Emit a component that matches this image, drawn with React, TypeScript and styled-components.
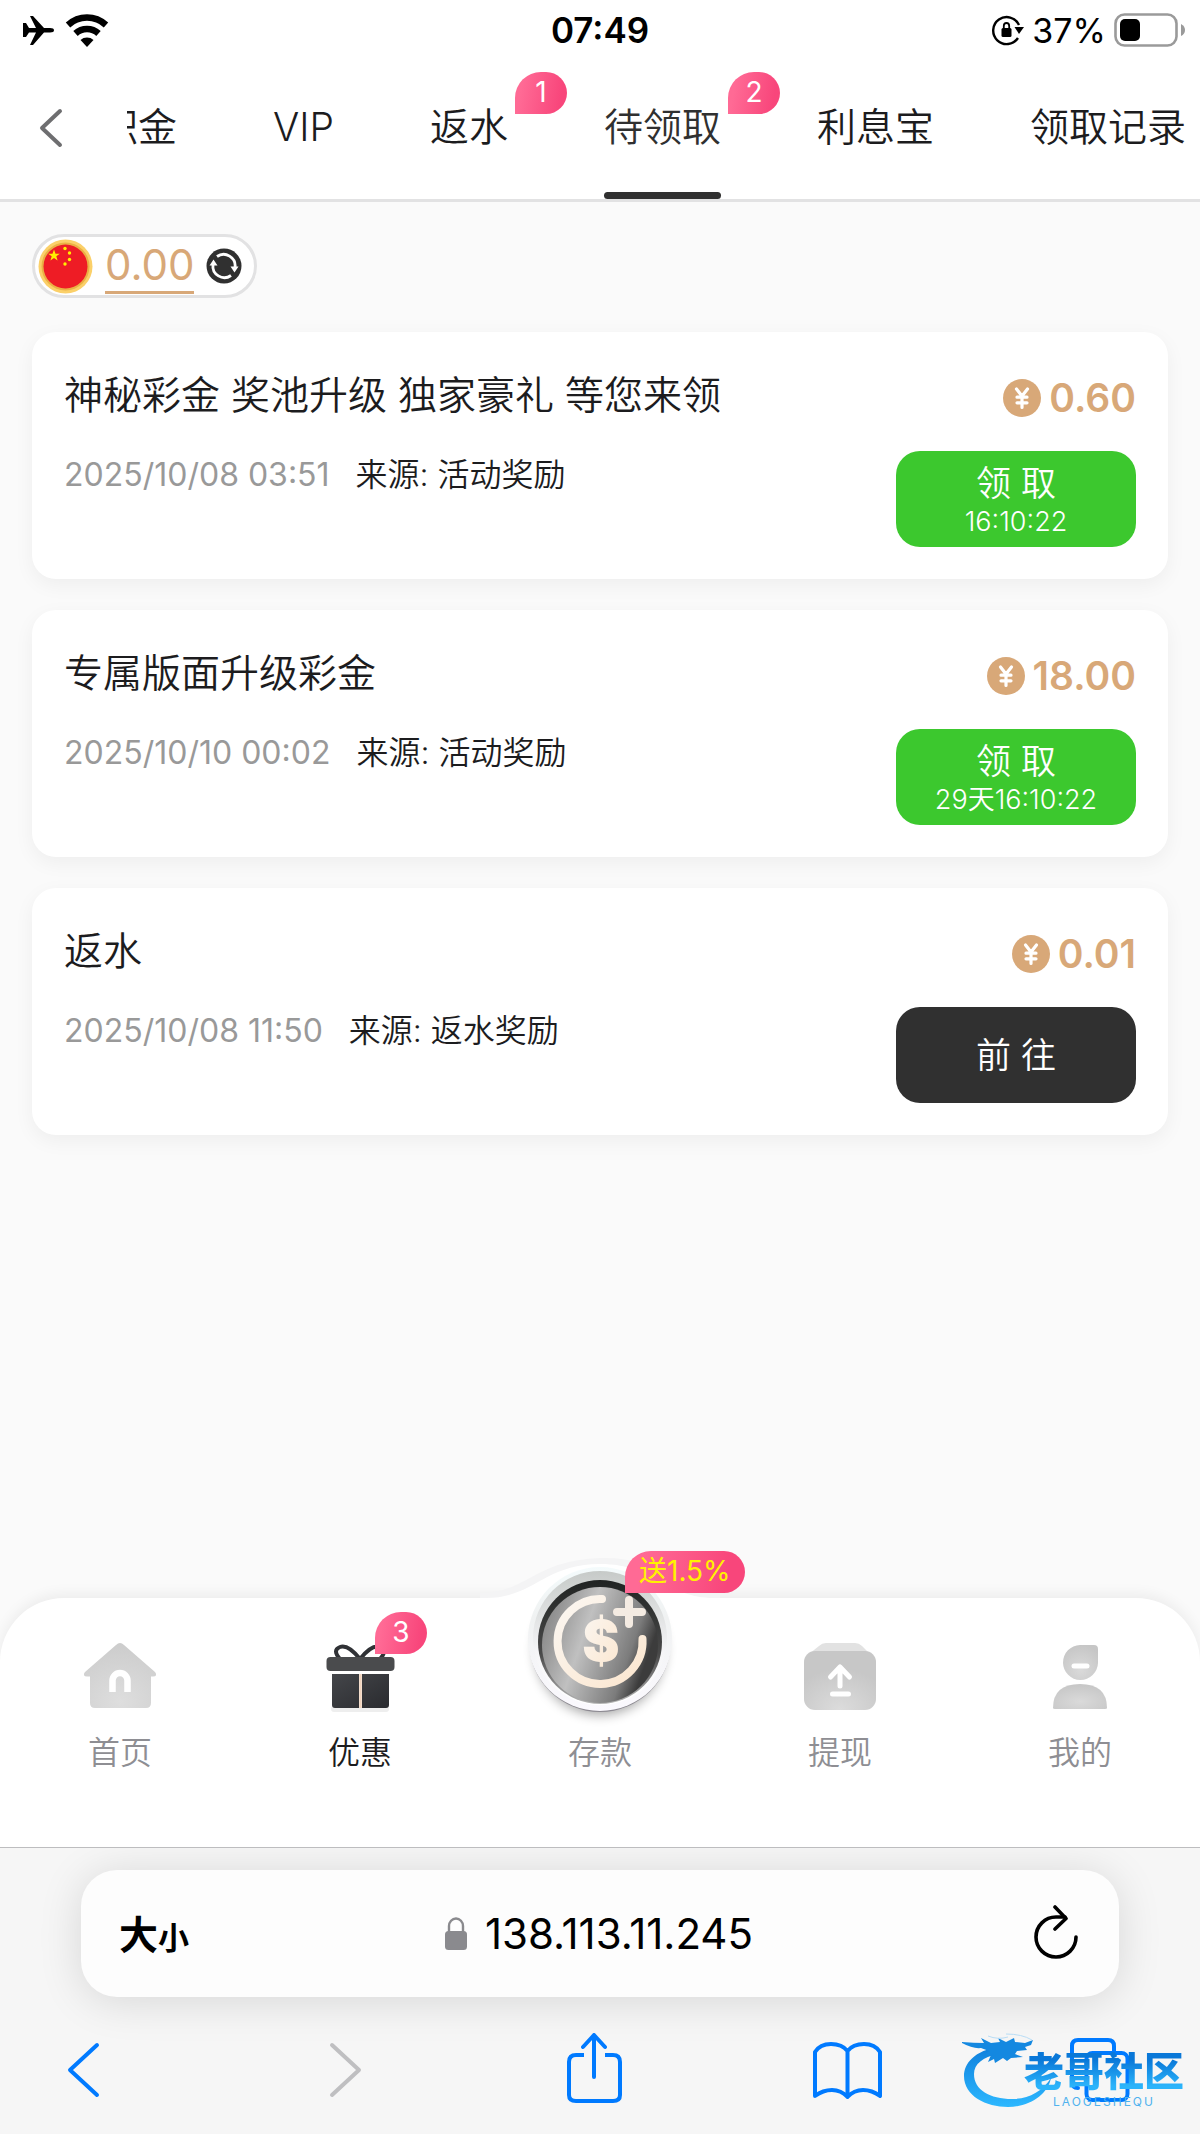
import React from "react";
import styled, { createGlobalStyle, css } from "styled-components";

const colors = {
  ink: "#1c1c1e",
  dark: "#303030",
  muted: "#8e8e93",
  date: "#999999",
  gold: "#d8a878",
  green: "#3cc82e",
  line: "#e2e2e3",
  blue: "#007aff",
};

const GlobalStyle = createGlobalStyle`
  *, *::before, *::after { box-sizing: border-box; }
  body {
    margin: 0;
    background: #fafafa;
    color: ${colors.ink};
    font-family: Inter, "Noto Sans CJK SC", sans-serif;
    font-weight: 350;
  }
  button {
    border: 0;
    padding: 0;
    background: none;
    color: inherit;
    font: inherit;
    cursor: pointer;
  }
  a { color: inherit; text-decoration: none; }
  h2, p { margin: 0; font-weight: inherit; }
  svg { display: block; flex: none; }
`;

const Page = styled.div`
  min-height: 100vh;
  display: flex;
  flex-direction: column;
`;

/* ---------- status bar ---------- */

const StatusBar = styled.div`
  display: grid;
  grid-template-columns: 1fr auto 1fr;
  align-items: center;
  height: 60px;
  padding: 0 14px;
  background: #fff;
  color: #000;
`;

const StatusGroup = styled.div<{ $end?: boolean }>`
  display: flex;
  align-items: center;
  gap: ${(p) => (p.$end ? 8 : 10)}px;
  justify-content: ${(p) => (p.$end ? "flex-end" : "flex-start")};
  padding-left: 8px;
  font-size: 34px;
  font-weight: 400;
`;

const Clock = styled.time`
  font-size: 35px;
  font-weight: 600;
`;

/* ---------- header with tabs ---------- */

const Header = styled.header`
  display: flex;
  background: #fff;
  border-bottom: 3px solid ${colors.line};
`;

const BackButton = styled.button`
  flex: none;
  width: 127px;
  padding: 0 0 4px 38px;
`;

const Tabs = styled.nav`
  flex: 1;
  min-width: 0;
  display: flex;
  justify-content: flex-end;
  gap: 96px;
  padding-right: 14px;
  overflow: hidden;
`;

const Tab = styled.a<{ $active?: boolean }>`
  position: relative;
  flex: none;
  height: 139px;
  padding-top: 39px;
  font-size: 39px;
  line-height: 56px;
  color: ${(p) => (p.$active ? colors.dark : colors.ink)};
  ${(p) =>
    p.$active &&
    css`
      &::after {
        content: "";
        position: absolute;
        left: 0;
        right: 0;
        bottom: 0;
        height: 7px;
        border-radius: 4px;
        background: ${colors.dark};
      }
    `}
`;

const Badge = styled.span`
  position: absolute;
  min-width: 52px;
  height: 42px;
  padding: 0 14px;
  border-radius: 26px 21px 21px 0;
  background: linear-gradient(100deg, #ff6a95 15%, #f8467b 85%);
  color: #fff;
  font-size: 28px;
  font-weight: 400;
  line-height: 41px;
  text-align: center;
  white-space: nowrap;
`;

const TabBadge = styled(Badge)`
  left: calc(100% + 7px);
  top: 12px;
`;

/* ---------- rewards ---------- */

const Main = styled.main`
  flex: 1;
  display: flex;
  flex-direction: column;
  align-items: flex-start;
  gap: 34px;
  padding: 32px;
`;

const Balance = styled.div`
  display: flex;
  align-items: center;
  gap: 12px;
  height: 64px;
  padding: 0 12px 0 3px;
  border: 3px solid ${colors.line};
  border-radius: 32px;
  background: #fff;
`;

const BalanceValue = styled.a`
  height: 55px;
  border-bottom: 3px solid ${colors.gold};
  color: ${colors.gold};
  font-size: 42px;
  font-weight: 400;
  line-height: 52px;
`;

const RewardList = styled.ul`
  align-self: stretch;
  display: flex;
  flex-direction: column;
  gap: 31px;
  margin: 0;
  padding: 0;
  list-style: none;
`;

const Card = styled.li`
  display: flex;
  justify-content: space-between;
  padding: 32px;
  border-radius: 24px;
  background: #fff;
  box-shadow: 0 6px 20px rgba(0, 0, 0, 0.05);
`;

const Info = styled.div`
  display: flex;
  flex-direction: column;
  gap: 28px;
`;

const Title = styled.h2`
  font-size: 39px;
  line-height: 61px;
`;

const Meta = styled.p`
  display: flex;
  gap: 26px;
  font-size: 32px;
  line-height: 44px;
`;

const DateText = styled.time`
  color: ${colors.date};
  font-weight: 400;
`;

const Claim = styled.div`
  display: flex;
  flex-direction: column;
  align-items: flex-end;
  gap: 20px;
`;

const Amount = styled.div`
  display: flex;
  align-items: center;
  gap: 8px;
  height: 67px;
  color: ${colors.gold};
  font-size: 39px;
  font-weight: 600;
`;

const ClaimButton = styled.button<{ $dark?: boolean }>`
  display: flex;
  flex-direction: column;
  align-items: center;
  justify-content: center;
  width: 240px;
  height: 96px;
  padding-top: ${(p) => (p.$dark ? 0 : 4)}px;
  border-radius: 24px;
  background: ${(p) => (p.$dark ? colors.dark : colors.green)};
  color: #fff;
`;

const ClaimLabel = styled.span`
  font-size: 35px;
  line-height: 42px;
`;

const Countdown = styled.span`
  font-size: 27px;
  line-height: 36px;
`;

/* ---------- app navigation ---------- */

const BottomNav = styled.nav`
  position: relative;
  display: grid;
  grid-template-columns: repeat(5, 1fr);
  height: 249px;
  padding-top: 44px;
  border-radius: 64px 64px 0 0;
  background: #fff;
  box-shadow: 0 -4px 14px rgba(0, 0, 0, 0.06);
`;

const Hump = styled.svg`
  position: absolute;
  left: 50%;
  top: -46px;
  margin-left: -120px;
`;

const NavItem = styled.a<{ $active?: boolean }>`
  display: flex;
  flex-direction: column;
  align-items: center;
  gap: 23px;
  color: ${(p) => (p.$active ? colors.ink : colors.muted)};
  font-size: 32px;
  line-height: 40px;
`;

const NavIcon = styled.span`
  position: relative;
  width: 72px;
  height: 68px;
`;

const CoinArt = styled.svg`
  position: absolute;
  left: -44px;
  top: -87px;
`;

const GiftBadge = styled(Badge)`
  left: 51px;
  top: -30px;
`;

const PromoBadge = styled(Badge)`
  left: 61px;
  top: -91px;
  color: #fff200;
`;

/* ---------- browser chrome ---------- */

const Browser = styled.footer`
  position: relative;
  padding-top: 22px;
  border-top: 1px solid #bdbdbf;
  background: #f6f6f6;
  color: #000;
  font-weight: 400;
  overflow: hidden;
`;

const AddressBar = styled.div`
  display: grid;
  grid-template-columns: 1fr auto 1fr;
  align-items: center;
  height: 127px;
  margin: 0 81px;
  padding: 0 40px 0 38px;
  border-radius: 36px;
  background: #fdfdfd;
  box-shadow: 0 4px 44px rgba(0, 0, 0, 0.13);
`;

const TextSize = styled.button`
  justify-self: start;
  padding-top: 6px;
  font-size: 39px;
  font-weight: 700;
  line-height: 50px;
  small { font-size: 31px; }
`;

const Address = styled.button`
  display: flex;
  align-items: center;
  gap: 18px;
  font-size: 42px;
`;

const ReloadButton = styled.button`
  justify-self: end;
  padding-bottom: 4px;
`;

const Toolbar = styled.div`
  display: flex;
  align-items: center;
  justify-content: space-between;
  height: 137px;
  padding: 6px 63px 0 47px;
`;

const ToolButton = styled.button`
  width: 72px;
  height: 72px;
`;

const Watermark = styled.div`
  position: absolute;
  right: 16px;
  bottom: 26px;
  display: flex;
  flex-direction: column;
  align-items: center;
  gap: 4px;
  pointer-events: none;
`;

const Dragon = styled.svg`
  position: absolute;
  right: 130px;
  bottom: 0;
`;

const WatermarkName = styled.span`
  position: relative;
  background: linear-gradient(#0a78d8 20%, #2bb4fb 85%);
  background-clip: text;
  color: transparent;
  font-size: 40px;
  font-weight: 900;
  line-height: 40px;
`;

const WatermarkSub = styled.span`
  position: relative;
  color: #4fb2ee;
  font-size: 12px;
  line-height: 12px;
  letter-spacing: 2px;
`;

/* ---------- drawings ---------- */

const Airplane = () => (
  <svg width="33" height="32" viewBox="0 0 33 32">
    <path d="M1 9h3l3 5h7L8 2h3l11 12h6q4 0 4 2.200t-4 2.200h-6L11 31H8l6-12.600H7L4 23H1z" />
  </svg>
);

const Wifi = () => (
  <svg width="44" height="33" viewBox="0 0 44 33">
    <path d="M22 33l-6.500-7a10 10 0 0 1 13 0z" />
    <path d="M10.500 19.500a17 17 0 0 1 23 0M3 11a28 28 0 0 1 38 0" fill="none" stroke="#000" strokeWidth="6.500" />
  </svg>
);

const RotationLock = () => (
  <svg width="32" height="32" viewBox="0 0 32 32">
    <path d="M26 24a13.500 13.500 0 1 1 1-13" fill="none" stroke="#000" strokeWidth="2.400" />
    <path d="M22.500 13H32l-5 7z" />
    <rect x="9.500" y="14" width="10" height="9" rx="1.500" />
    <path d="M11.800 15v-3a2.700 3 0 0 1 5.400 0v3" fill="none" stroke="#000" strokeWidth="1.800" />
  </svg>
);

const Battery = () => (
  <svg width="72" height="34" viewBox="0 0 72 34">
    <rect x="1.500" y="1.500" width="61" height="31" rx="9" fill="none" stroke="#9a9a9a" strokeWidth="2.600" />
    <rect x="6" y="6" width="20" height="22" rx="5" />
    <path d="M67 11q4 2 4 6t-4 6z" fill="#9a9a9a" />
  </svg>
);

const BackIcon = () => (
  <svg width="26" height="42" viewBox="0 0 26 42">
    <path d="M22 4L4 21l18 17" fill="none" stroke="#6e6e70" strokeWidth="4" strokeLinecap="round" strokeLinejoin="round" />
  </svg>
);

const starPath = "M0-6l1.500 4.200h4.300l-3.500 2.600 1.300 4.200L0 2.500l-3.600 2.500 1.300-4.200-3.500-2.600h4.300z";

const Flag = () => (
  <svg width="55" height="55" viewBox="0 0 55 55">
    <circle cx="27.500" cy="27.500" r="27" fill="#fbd069" />
    <circle cx="27.500" cy="27.500" r="24" fill="#eab044" />
    <circle cx="27.500" cy="27.500" r="22" fill="#ee1c25" />
    <g fill="#ffef00">
      <path d={starPath} transform="translate(16 16.500)" />
      <circle cx="27" cy="9.500" r="1.700" />
      <circle cx="31.500" cy="14" r="1.700" />
      <circle cx="31.500" cy="20.500" r="1.700" />
      <circle cx="27" cy="25" r="1.700" />
    </g>
  </svg>
);

const Refresh = () => (
  <svg width="36" height="36" viewBox="0 0 36 36">
    <circle cx="18" cy="18" r="17.500" fill={colors.dark} />
    <g fill="none" stroke="#fff" strokeWidth="2.800">
      <path d="M11 8.500a11.500 11.500 0 0 1 18 11" />
      <path d="M25 27.500a11.500 11.500 0 0 1-18-11" />
    </g>
    <path d="M24.500 18.500h8l-4 6zM3.500 17.500h8l-4-6z" fill="#fff" />
  </svg>
);

const Yuan = () => (
  <svg width="38" height="38" viewBox="0 0 38 38">
    <circle cx="19" cy="19" r="19" fill={colors.gold} />
    <path d="M13.500 10l5.500 7 5.500-7M19 17v11.500M14 18.200h10M14 23.800h10" fill="none" stroke="#fff" strokeWidth="3.200" strokeLinecap="round" strokeLinejoin="round" />
  </svg>
);

const HomeIcon = () => (
  <svg width="72" height="68" viewBox="0 0 72 68">
    <defs>
      <radialGradient id="homeFill" cx=".5" cy=".9" r=".9">
        <stop offset="0" stopColor="#dedede" />
        <stop offset="1" stopColor="#cccccc" />
      </radialGradient>
    </defs>
    <path d="M32 3q4-4 8 0l31 27q3 4-2 4.500h-2V61q0 5-5 5H11q-5 0-5-5V34.500H3Q-2 34 1 30z" fill="url(#homeFill)" />
    <path d="M28.500 50V38.500a7.500 7.500 0 0 1 15 0V50" fill="none" stroke="#fff" strokeWidth="6.500" strokeLinejoin="round" />
  </svg>
);

const GiftIcon = () => (
  <svg width="72" height="72" viewBox="0 0 72 72">
    <defs>
      <linearGradient id="giftFill" x1="0" y1="0" x2="1" y2="1">
        <stop offset="0" stopColor="#44464a" />
        <stop offset="1" stopColor="#2a2b2f" />
      </linearGradient>
    </defs>
    <g fill="none" stroke="#303236" strokeWidth="4">
      <path d="M36 17Q24 2 16 5t0 12M36 17Q48 2 56 5t0 12" />
    </g>
    <rect x="7" y="64" width="58" height="6" rx="3" fill="#eee" />
    <rect x="2.500" y="15" width="68" height="14" rx="4" fill="#4a4b4d" />
    <path d="M8 32h27v34H11q-3 0-3-3zM38 32h27v31q0 3-3 3H38z" fill="url(#giftFill)" />
    <path d="M36.500 32v34" stroke="#f0d3bd" strokeWidth="2.500" />
  </svg>
);

const WithdrawIcon = () => (
  <svg width="72" height="68" viewBox="0 0 72 68">
    <defs>
      <radialGradient id="drawFill" cx=".5" cy="1" r=".7">
        <stop offset="0" stopColor="#dcdcdc" />
        <stop offset="1" stopColor="#c7c7c7" />
      </radialGradient>
    </defs>
    <path d="M5 12l10-8q3-3 7-3h29q4 0 7 3l8 8z" fill="#e2e2e2" />
    <rect x="0" y="9" width="72" height="59" rx="11" fill="url(#drawFill)" />
    <path d="M36 44V25M26.500 35l9.500-10 9.500 10M28.500 52h16" fill="none" stroke="#fff" strokeWidth="5" strokeLinecap="round" strokeLinejoin="round" />
  </svg>
);

const MeIcon = () => (
  <svg width="72" height="68" viewBox="0 0 72 68">
    <defs>
      <radialGradient id="meFill" cx=".5" cy=".7" r=".7">
        <stop offset="0" stopColor="#dadada" />
        <stop offset="1" stopColor="#c6c6c6" />
      </radialGradient>
    </defs>
    <path d="M36 3h14q4 0 4 4v14a17.500 17.500 0 1 1-18-18z" fill="url(#meFill)" />
    <path d="M30 24h13" stroke="#fff" strokeWidth="5" strokeLinecap="round" />
    <path d="M9 66q0-24 27-24t27 24q0 1-2 1H11q-2 0-2-1z" fill="url(#meFill)" />
  </svg>
);

const DepositIcon = () => (
  <CoinArt width="160" height="176" viewBox="520 1555 160 176" aria-hidden="true">
    <defs>
      <linearGradient id="rim" x1="0" y1="0" x2="0" y2="1">
        <stop offset="0" stopColor="#f4fbfc" />
        <stop offset=".35" stopColor="#f0f2f2" />
        <stop offset="1" stopColor="#fbf9fe" />
      </linearGradient>
      <linearGradient id="bowl" x1="0" y1="0" x2="0" y2="1">
        <stop offset="0" stopColor="#c6cac8" />
        <stop offset=".6" stopColor="#f5f5f7" />
        <stop offset="1" stopColor="#ffffff" />
      </linearGradient>
      <linearGradient id="disc" x1="0" y1="0" x2="1" y2=".35">
        <stop offset="0" stopColor="#7c7c7c" />
        <stop offset=".2" stopColor="#979797" />
        <stop offset=".45" stopColor="#c0c0c0" />
        <stop offset=".6" stopColor="#a6a6a6" />
        <stop offset=".85" stopColor="#7c7c7c" />
        <stop offset="1" stopColor="#3c3c3c" />
      </linearGradient>
      <linearGradient id="edge" x1="0" y1="0" x2="0" y2="1">
        <stop offset="0" stopColor="#202322" />
        <stop offset=".6" stopColor="#4a4a4a" />
        <stop offset="1" stopColor="#b5b5b5" />
      </linearGradient>
      <linearGradient id="cream" x1="0" y1="0" x2="1" y2="1">
        <stop offset="0" stopColor="#fbf7f2" />
        <stop offset="1" stopColor="#fbe6cf" />
      </linearGradient>
      <filter id="coinShadow" x="-20%" y="-20%" width="140%" height="140%">
        <feGaussianBlur stdDeviation="6" />
      </filter>
    </defs>
    <circle cx="600" cy="1650" r="65" fill="#000" opacity=".35" filter="url(#coinShadow)" />
    <circle cx="600" cy="1641" r="71" fill="#8d8a92" />
    <circle cx="600" cy="1639" r="72" fill="url(#rim)" />
    <circle cx="600" cy="1638" r="67" fill="url(#bowl)" />
    <circle cx="600" cy="1642" r="62" fill="url(#edge)" />
    <circle cx="600" cy="1645" r="58" fill="url(#disc)" />
    <path d="M602 1599a42.500 42.500 0 1 0 40.500 40" fill="none" stroke="url(#cream)" strokeWidth="8" strokeLinecap="round" />
    <path d="M629 1600v24M617 1612h25" stroke="#f4ebe2" strokeWidth="8" strokeLinecap="round" />
    <text x="601" y="1661" textAnchor="middle" fontFamily="Inter, sans-serif" fontSize="56" fontWeight="900" fill="url(#cream)">$</text>
  </CoinArt>
);

const LockIcon = () => (
  <svg width="22" height="34" viewBox="0 0 22 34">
    <rect x="0" y="14" width="22" height="19" rx="3.500" fill="#8a8a8e" />
    <path d="M4 15V9a7 7.500 0 0 1 14 0v6" fill="none" stroke="#8a8a8e" strokeWidth="2.400" />
  </svg>
);

const ReloadIcon = () => (
  <svg width="46" height="54" viewBox="0 0 46 54">
    <g fill="none" stroke="#000" strokeWidth="3.600" strokeLinecap="round" strokeLinejoin="round">
      <path d="M43 32a20 20 0 1 1-20-20h9" />
      <path d="M22 2l11 11.500L22 24" />
    </g>
  </svg>
);

const blueStroke = {
  fill: "none",
  stroke: colors.blue,
  strokeWidth: 4,
  strokeLinecap: "round" as const,
  strokeLinejoin: "round" as const,
};

const DragonArt = () => (
  <Dragon width="92" height="76" viewBox="0 0 92 76" aria-hidden="true">
    <defs>
      <linearGradient id="dragonFill" x1="0" y1="0" x2="0" y2="1">
        <stop offset="0" stopColor="#0f7fdc" />
        <stop offset="1" stopColor="#2db8ff" />
      </linearGradient>
    </defs>
    <g fill="url(#dragonFill)">
      <path d="M38 15C12 18 2 32 2 44c0 20 22 31 44 31s40-13 43-29C80 60 66 67 50 67 28 67 12 58 12 42c0-10 9-17 24-20z" />
    </g>
    <path
      d="M0 10q12 1 22 1l-3-5 10 5 9-1-2-4 8 4 8-4 1 4 10 1 8-3-2 5-6 2 2 3-10 1-2 3 8 3-12 1-4 3-4-3-8 5-1-4-6 3 3-7-8 1 6-5-8-3q-8 1-19-5z"
      fill="#1488e0"
    />
    <path d="M26 4q10 4 20 1M44 2q16 0 26 6" fill="none" stroke="#b9ddf5" strokeWidth="1" />
  </Dragon>
);

/* ---------- data ---------- */

const tabs = [
  { label: "公积金" },
  { label: "VIP" },
  { label: "返水", badge: 1 },
  { label: "待领取", badge: 2, active: true },
  { label: "利息宝" },
  { label: "领取记录" },
];

const rewards = [
  {
    title: "神秘彩金 奖池升级 独家豪礼 等您来领",
    date: "2025/10/08 03:51",
    source: "活动奖励",
    amount: "0.60",
    action: "领 取",
    countdown: "16:10:22",
  },
  {
    title: "专属版面升级彩金",
    date: "2025/10/10 00:02",
    source: "活动奖励",
    amount: "18.00",
    action: "领 取",
    countdown: "29天16:10:22",
  },
  {
    title: "返水",
    date: "2025/10/08 11:50",
    source: "返水奖励",
    amount: "0.01",
    action: "前 往",
  },
];

export default function App() {
  return (
    <Page>
      <GlobalStyle />
      <StatusBar>
        <StatusGroup>
          <Airplane />
          <Wifi />
        </StatusGroup>
        <Clock>07:49</Clock>
        <StatusGroup $end>
          <RotationLock />
          <span>37%</span>
          <Battery />
        </StatusGroup>
      </StatusBar>

      <Header>
        <BackButton aria-label="返回">
          <BackIcon />
        </BackButton>
        <Tabs>
          {tabs.map((t) => (
            <Tab key={t.label} href="#" $active={t.active}>
              {t.label}
              {t.badge && <TabBadge>{t.badge}</TabBadge>}
            </Tab>
          ))}
        </Tabs>
      </Header>

      <Main>
        <Balance>
          <Flag />
          <BalanceValue href="#">0.00</BalanceValue>
          <button aria-label="刷新余额">
            <Refresh />
          </button>
        </Balance>
        <RewardList>
          {rewards.map((r) => (
            <Card key={r.title}>
              <Info>
                <Title>{r.title}</Title>
                <Meta>
                  <DateText>{r.date}</DateText>
                  <span>来源: {r.source}</span>
                </Meta>
              </Info>
              <Claim>
                <Amount>
                  <Yuan />
                  {r.amount}
                </Amount>
                <ClaimButton $dark={!r.countdown}>
                  <ClaimLabel>{r.action}</ClaimLabel>
                  {r.countdown && <Countdown>{r.countdown}</Countdown>}
                </ClaimButton>
              </Claim>
            </Card>
          ))}
        </RewardList>
      </Main>

      <BottomNav>
        <Hump width="240" height="60" viewBox="0 0 240 60" aria-hidden="true">
          <path d="M0 45C48 45 56 12 120 10s72 35 120 35" fill="none" stroke="#f4f4f5" strokeWidth="8" />
          <path d="M0 60V46h6C54 46 64 12 120 12s66 34 114 34h6v14z" fill="#fff" />
        </Hump>
        <NavItem href="#">
          <NavIcon>
            <HomeIcon />
          </NavIcon>
          首页
        </NavItem>
        <NavItem href="#" $active>
          <NavIcon>
            <GiftIcon />
            <GiftBadge>3</GiftBadge>
          </NavIcon>
          优惠
        </NavItem>
        <NavItem href="#">
          <NavIcon>
            <DepositIcon />
            <PromoBadge>送1.5%</PromoBadge>
          </NavIcon>
          存款
        </NavItem>
        <NavItem href="#">
          <NavIcon>
            <WithdrawIcon />
          </NavIcon>
          提现
        </NavItem>
        <NavItem href="#">
          <NavIcon>
            <MeIcon />
          </NavIcon>
          我的
        </NavItem>
      </BottomNav>

      <Browser>
        <AddressBar>
          <TextSize>
            大<small>小</small>
          </TextSize>
          <Address>
            <LockIcon />
            138.113.11.245
          </Address>
          <ReloadButton aria-label="重新载入">
            <ReloadIcon />
          </ReloadButton>
        </AddressBar>
        <Toolbar>
          <ToolButton aria-label="后退">
            <svg width="72" height="72" viewBox="0 0 72 72">
              <path d="M50 12L23 37l27 25" {...blueStroke} />
            </svg>
          </ToolButton>
          <ToolButton aria-label="前进">
            <svg width="72" height="72" viewBox="0 0 72 72">
              <path d="M30 12l27 25-27 25" {...blueStroke} stroke="#bfbfc1" />
            </svg>
          </ToolButton>
          <ToolButton aria-label="分享">
            <svg width="72" height="72" viewBox="0 0 72 72">
              <g {...blueStroke}>
                <path d="M28 22h-8q-7 0-7 7v33q0 6 7 6h37q7 0 7-6V29q0-7-7-7h-8" strokeLinecap="butt" />
                <path d="M38 44V3M27 14L38 2l11 12" />
              </g>
            </svg>
          </ToolButton>
          <ToolButton aria-label="书签">
            <svg width="72" height="72" viewBox="0 0 72 72">
              <path
                d="M36.500 18Q31 11 20 11T4 19v44q8-6 17-6t15.500 7Q43 57 52 57t17 6V19Q64 11 53 11t-16.500 7zV64"
                {...blueStroke}
              />
            </svg>
          </ToolButton>
          <ToolButton aria-label="标签页">
            <svg width="72" height="72" viewBox="0 0 72 72">
              <g {...blueStroke}>
                <path d="M13 55q-6 0-6-7V13q0-6 6-6h30q6 0 6 6v7" />
                <rect x="21.500" y="20" width="41" height="47" rx="6" />
              </g>
            </svg>
          </ToolButton>
        </Toolbar>
        <Watermark>
          <DragonArt />
          <WatermarkName>老哥社区</WatermarkName>
          <WatermarkSub>LAOGESHEQU</WatermarkSub>
        </Watermark>
      </Browser>
    </Page>
  );
}
